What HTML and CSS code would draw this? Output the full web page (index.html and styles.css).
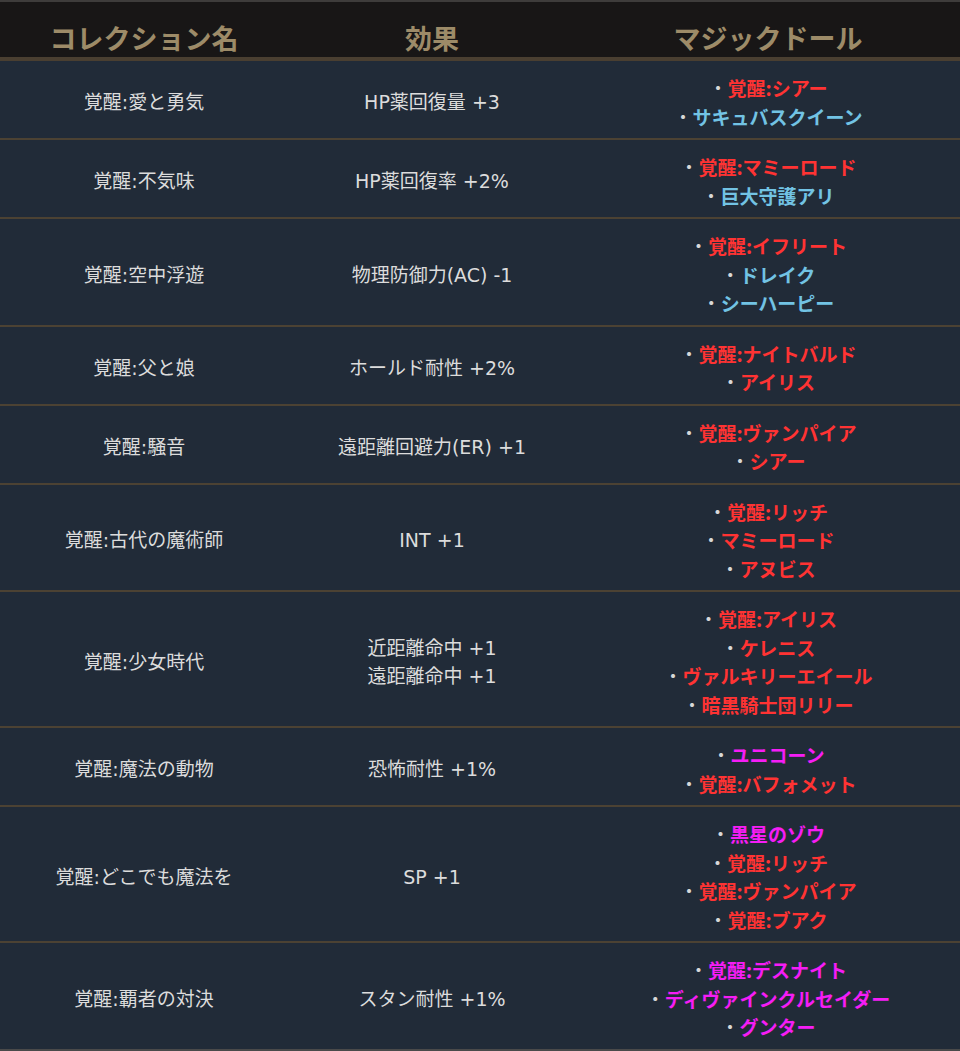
FILE: index.html
```html
<!DOCTYPE html>
<html lang="ja">
<head>
<meta charset="utf-8">
<link rel="stylesheet" href="styles.css">
</head>
<body>
<table class="coll">
  <colgroup><col class="c1"><col class="c2"><col class="c3"></colgroup>
  <thead>
    <tr><th>コレクション名</th><th>効果</th><th>マジックドール</th></tr>
  </thead>
  <tbody>
    <tr><td>覚醒:愛と勇気</td><td>HP薬回復量 +3</td>
      <td><div><span class="b">・</span><span class="r">覚醒:シアー</span></div><div><span class="b">・</span><span class="u">サキュバスクイーン</span></div></td></tr>
    <tr><td>覚醒:不気味</td><td>HP薬回復率 +2%</td>
      <td><div><span class="b">・</span><span class="r">覚醒:マミーロード</span></div><div><span class="b">・</span><span class="u">巨大守護アリ</span></div></td></tr>
    <tr><td>覚醒:空中浮遊</td><td>物理防御力(AC) -1</td>
      <td><div><span class="b">・</span><span class="r">覚醒:イフリート</span></div><div><span class="b">・</span><span class="u">ドレイク</span></div><div><span class="b">・</span><span class="u">シーハーピー</span></div></td></tr>
    <tr><td>覚醒:父と娘</td><td>ホールド耐性 +2%</td>
      <td><div><span class="b">・</span><span class="r">覚醒:ナイトバルド</span></div><div><span class="b">・</span><span class="r">アイリス</span></div></td></tr>
    <tr><td>覚醒:騒音</td><td>遠距離回避力(ER) +1</td>
      <td><div><span class="b">・</span><span class="r">覚醒:ヴァンパイア</span></div><div><span class="b">・</span><span class="r">シアー</span></div></td></tr>
    <tr><td>覚醒:古代の魔術師</td><td>INT +1</td>
      <td><div><span class="b">・</span><span class="r">覚醒:リッチ</span></div><div><span class="b">・</span><span class="r">マミーロード</span></div><div><span class="b">・</span><span class="r">アヌビス</span></div></td></tr>
    <tr><td>覚醒:少女時代</td><td><div>近距離命中 +1</div><div>遠距離命中 +1</div></td>
      <td><div><span class="b">・</span><span class="r">覚醒:アイリス</span></div><div><span class="b">・</span><span class="r">ケレニス</span></div><div><span class="b">・</span><span class="r">ヴァルキリーエイール</span></div><div><span class="b">・</span><span class="r">暗黒騎士団リリー</span></div></td></tr>
    <tr><td>覚醒:魔法の動物</td><td>恐怖耐性 +1%</td>
      <td><div><span class="b">・</span><span class="m">ユニコーン</span></div><div><span class="b">・</span><span class="r">覚醒:バフォメット</span></div></td></tr>
    <tr><td>覚醒:どこでも魔法を</td><td>SP +1</td>
      <td><div><span class="b">・</span><span class="m">黒星のゾウ</span></div><div><span class="b">・</span><span class="r">覚醒:リッチ</span></div><div><span class="b">・</span><span class="r">覚醒:ヴァンパイア</span></div><div><span class="b">・</span><span class="r">覚醒:ブアク</span></div></td></tr>
    <tr class="last"><td>覚醒:覇者の対決</td><td>スタン耐性 +1%</td>
      <td><div><span class="b">・</span><span class="m">覚醒:デスナイト</span></div><div><span class="b">・</span><span class="m">ディヴァインクルセイダー</span></div><div><span class="b">・</span><span class="m">グンター</span></div></td></tr>
  </tbody>
</table>
</body>
</html>
```
FILE: styles.css
```css
html, body {
  margin: 0;
  padding: 0;
  background: #212b38;
}
body {
  font-family: "Noto Sans CJK JP", "Noto Sans", sans-serif;
}
.coll {
  width: 960px;
  border-collapse: collapse;
  table-layout: fixed;
}
.c1 { width: 288px; }
.c2 { width: 288px; }
.c3 { width: 384px; }
.coll thead th {
  background: #181616;
  color: #9d8b68;
  font-size: 27px;
  font-weight: 700;
  line-height: 38px;
  padding: 17px 0 0;
  border-top: 2px solid #3e3c3b;
  border-bottom: 4px solid #4a3f31;
  text-align: center;
}
.coll td {
  background: #212b38;
  color: #dcdcdc;
  font-family: "DejaVu Sans", "Noto Sans CJK JP", sans-serif;
  font-size: 19px;
  line-height: 28.5px;
  padding: 13px 0 7px;
  text-align: center;
  vertical-align: middle;
  border-bottom: 2px solid #4c4233;
}
.coll td:nth-child(3) {
  font-family: "Noto Sans CJK JP", "Noto Sans", sans-serif;
  font-size: 19px;
  font-weight: 700;
}
.coll tr.last td {
  border-bottom: 3px solid #4a4a4a;
}
.b { color: #d8d8d8; font-weight: 400; }
.r { color: #ff3333; }
.u { color: #72c3e4; }
.m { color: #f51df5; }
```
